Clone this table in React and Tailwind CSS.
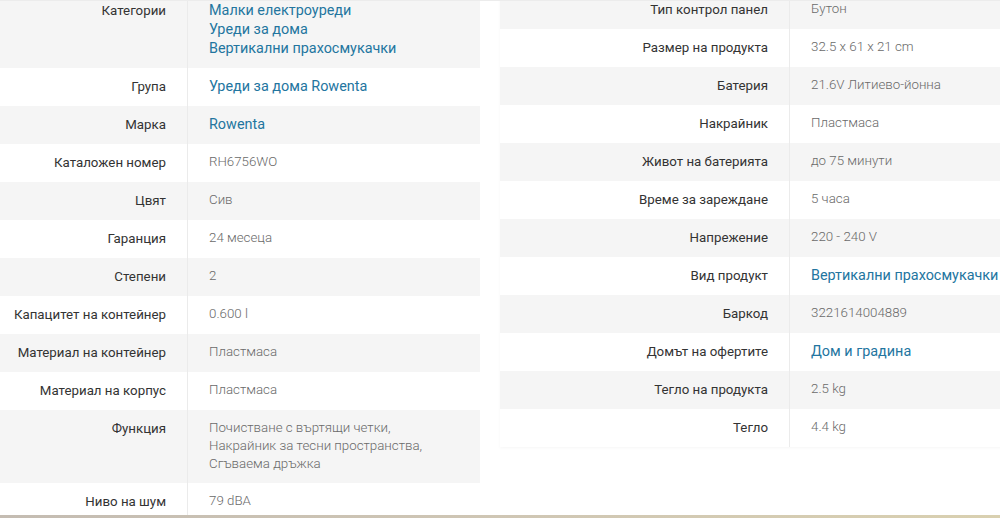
const LINK = 'link';

const leftRows = [
  { label: 'Категории', value: ['Малки електроуреди', 'Уреди за дома', 'Вертикални прахосмукачки'], type: LINK },
  { label: 'Група', value: ['Уреди за дома Rowenta'], type: LINK },
  { label: 'Марка', value: ['Rowenta'], type: LINK },
  { label: 'Каталожен номер', value: ['RH6756WO'] },
  { label: 'Цвят', value: ['Сив'] },
  { label: 'Гаранция', value: ['24 месеца'] },
  { label: 'Степени', value: ['2'] },
  { label: 'Капацитет на контейнер', value: ['0.600 l'] },
  { label: 'Материал на контейнер', value: ['Пластмаса'] },
  { label: 'Материал на корпус', value: ['Пластмаса'] },
  { label: 'Функция', value: ['Почистване с въртящи четки,', 'Накрайник за тесни пространства,', 'Сгъваема дръжка'] },
  { label: 'Ниво на шум', value: ['79 dBA'] },
];

const rightRows = [
  { label: 'Тип контрол панел', value: ['Бутон'] },
  { label: 'Размер на продукта', value: ['32.5 x 61 x 21 cm'] },
  { label: 'Батерия', value: ['21.6V Литиево-йонна'] },
  { label: 'Накрайник', value: ['Пластмаса'] },
  { label: 'Живот на батерията', value: ['до 75 минути'] },
  { label: 'Време за зареждане', value: ['5 часа'] },
  { label: 'Напрежение', value: ['220 - 240 V'] },
  { label: 'Вид продукт', value: ['Вертикални прахосмукачки'], type: LINK },
  { label: 'Баркод', value: ['3221614004889'] },
  { label: 'Домът на офертите', value: ['Дом и градина'], type: LINK },
  { label: 'Тегло на продукта', value: ['2.5 kg'] },
  { label: 'Тегло', value: ['4.4 kg'] },
];

function SpecTable({ rows, labelWidth, className }) {
  return (
    <div className={className}>
      {rows.map((row, i) => {
        const isLink = row.type === LINK;
        return (
          <div key={row.label} className={`flex ${i % 2 === 0 ? 'bg-[#f5f5f5]' : 'bg-white'}`}>
            <div
              className="shrink-0 text-right pr-[21px] pt-[9px] pb-[10px] text-[13.3px] leading-[19px] text-[#333] border-r border-[#ebebeb]"
              style={{ width: labelWidth }}
            >
              {row.label}
            </div>
            <div className="pl-[21px] pt-[9px] pb-[10px] whitespace-nowrap">
              {row.value.map((v) => (
                <div
                  key={v}
                  className={isLink
                    ? 'text-[14.4px] leading-[19px] text-[#23759f]'
                    : 'text-[13.3px] leading-[18px] font-light text-[#6a6a6a]'}
                >
                  {v}
                </div>
              ))}
            </div>
          </div>
        );
      })}
    </div>
  );
}

export default function App() {
  return (
    <div className="w-[1000px] h-[518px] overflow-hidden bg-white flex flex-col" style={{ fontFamily: 'Roboto, "Liberation Sans", sans-serif' }}>
      <div className="h-[515px] overflow-hidden flex gap-[20px] border-t border-[#ececec]">
        <SpecTable rows={leftRows} labelWidth={188} className="w-[480px] shrink-0 -mt-[9px] self-start" />
        <SpecTable rows={rightRows} labelWidth={290} className="w-[520px] shrink-0 -mt-[10px] shadow-[0_1px_3px_rgba(0,0,0,0.04)] self-start" />
      </div>
      <div className="h-[3px] bg-gradient-to-r from-[#c4bcb2] via-[#cfc6b4] to-[#d9d0b0]" />
    </div>
  );
}
